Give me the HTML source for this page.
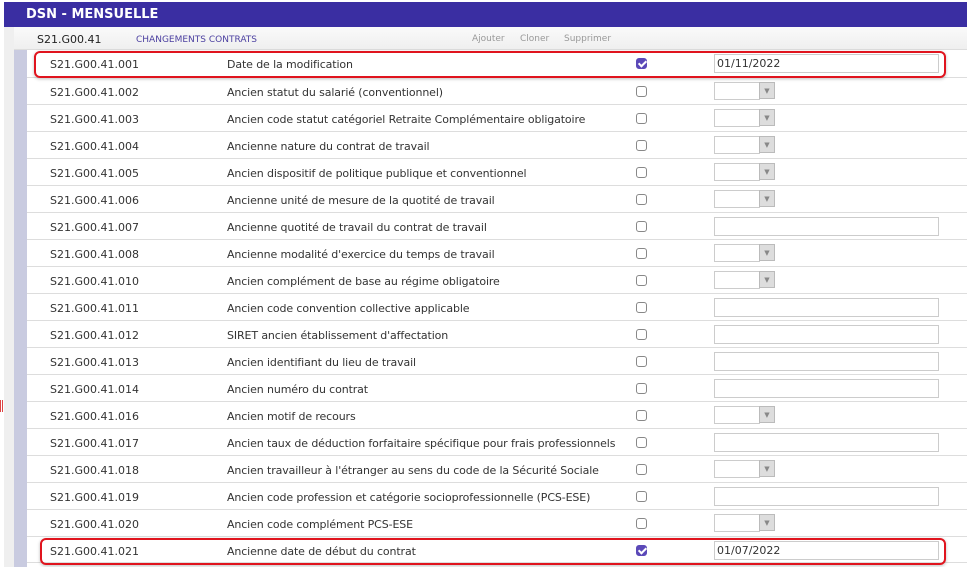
<!DOCTYPE html>
<html><head><meta charset="utf-8"><style>
*{margin:0;padding:0;box-sizing:border-box}
body{width:967px;height:567px;background:#fff;position:relative;overflow:hidden;font-family:"DejaVu Sans",Verdana,sans-serif;font-size:11px;color:#333}
.lg{position:absolute;left:0;top:0;width:4px;height:567px;background:#fff}
.left{position:absolute;left:4px;top:27px;width:10px;height:540px;background:#efefef}
.strip{position:absolute;left:14px;top:50px;width:13px;height:517px;background:#c9cbe0}
.hdr{position:absolute;left:4px;top:2px;width:963px;height:25px;background:#3a2ea2;color:#fff;font-weight:bold;font-size:13px;padding:5px 0 0 22px}
.sub{position:absolute;left:14px;top:27px;width:953px;height:23px;background:linear-gradient(#fafafa,#efefef);border-bottom:1px solid #ddd}
.sub .c{position:absolute;left:23px;top:6px;color:#222}
.sub .t{position:absolute;left:122px;top:8px;font-size:9px;color:#4b3fa0}
.sub .a{position:absolute;top:7px;font-size:9px;color:#999}
.row{position:absolute;left:27px;width:940px;height:27px;border-top:1px solid #ddd}
.row .c{position:absolute;left:23px;top:8px}
.row .l{position:absolute;left:200px;top:8px;letter-spacing:-0.12px}
.cb{position:absolute;left:609px;top:8px;width:11px;height:11px;border:1px solid #888;border-radius:3px;background:#fff}
.cb.on{background:#5b49b8;border-color:#5b49b8}
.cb.on:after{content:"";position:absolute;left:3px;top:0px;width:3px;height:6px;border:solid #fff;border-width:0 2px 2px 0;transform:rotate(45deg)}
.in{position:absolute;left:687px;top:4px;width:225px;height:19px;border:1px solid #ccc;background:#fff;padding:2px 2px;font-size:11px;color:#333}
.sel{position:absolute;left:687px;top:4px;width:46px;height:18px;border:1px solid #ccc;border-right:none;background:#fff}
.arr{position:absolute;left:732px;top:4px;width:16px;height:17px;border:1px solid #bbb;background:#ddd;font-size:7px;color:#888;text-align:center;line-height:16px}
.red{position:absolute;border:2px solid #e0141e;border-radius:6px;box-shadow:0 1px 3px rgba(0,0,0,.25)}
.rm{position:absolute;left:0;top:400px;width:1px;height:12px;background:#d44;box-shadow:2px 0 #d44}
</style></head><body>
<div class="lg"></div><div class="left"></div><div class="strip"></div>
<div class="hdr">DSN - MENSUELLE</div>
<div class="sub"><span class="c">S21.G00.41</span><span class="t">CHANGEMENTS CONTRATS</span><span class="a" style="left:458px">Ajouter</span><span class="a" style="left:506px">Cloner</span><span class="a" style="left:550px">Supprimer</span></div>
<div class="rm"></div>
<div class="row" style="top:50px;border-top:none"><span class="c">S21.G00.41.001</span><span class="l">Date de la modification</span><span class="cb on"></span><span class="in">01/11/2022</span></div>
<div class="row" style="top:77px"><span class="c">S21.G00.41.002</span><span class="l">Ancien statut du salarié (conventionnel)</span><span class="cb"></span><span class="sel"></span><span class="arr">▼</span></div>
<div class="row" style="top:104px"><span class="c">S21.G00.41.003</span><span class="l">Ancien code statut catégoriel Retraite Complémentaire obligatoire</span><span class="cb"></span><span class="sel"></span><span class="arr">▼</span></div>
<div class="row" style="top:131px"><span class="c">S21.G00.41.004</span><span class="l">Ancienne nature du contrat de travail</span><span class="cb"></span><span class="sel"></span><span class="arr">▼</span></div>
<div class="row" style="top:158px"><span class="c">S21.G00.41.005</span><span class="l">Ancien dispositif de politique publique et conventionnel</span><span class="cb"></span><span class="sel"></span><span class="arr">▼</span></div>
<div class="row" style="top:185px"><span class="c">S21.G00.41.006</span><span class="l">Ancienne unité de mesure de la quotité de travail</span><span class="cb"></span><span class="sel"></span><span class="arr">▼</span></div>
<div class="row" style="top:212px"><span class="c">S21.G00.41.007</span><span class="l">Ancienne quotité de travail du contrat de travail</span><span class="cb"></span><span class="in"></span></div>
<div class="row" style="top:239px"><span class="c">S21.G00.41.008</span><span class="l">Ancienne modalité d'exercice du temps de travail</span><span class="cb"></span><span class="sel"></span><span class="arr">▼</span></div>
<div class="row" style="top:266px"><span class="c">S21.G00.41.010</span><span class="l">Ancien complément de base au régime obligatoire</span><span class="cb"></span><span class="sel"></span><span class="arr">▼</span></div>
<div class="row" style="top:293px"><span class="c">S21.G00.41.011</span><span class="l">Ancien code convention collective applicable</span><span class="cb"></span><span class="in"></span></div>
<div class="row" style="top:320px"><span class="c">S21.G00.41.012</span><span class="l">SIRET ancien établissement d'affectation</span><span class="cb"></span><span class="in"></span></div>
<div class="row" style="top:347px"><span class="c">S21.G00.41.013</span><span class="l">Ancien identifiant du lieu de travail</span><span class="cb"></span><span class="in"></span></div>
<div class="row" style="top:374px"><span class="c">S21.G00.41.014</span><span class="l">Ancien numéro du contrat</span><span class="cb"></span><span class="in"></span></div>
<div class="row" style="top:401px"><span class="c">S21.G00.41.016</span><span class="l">Ancien motif de recours</span><span class="cb"></span><span class="sel"></span><span class="arr">▼</span></div>
<div class="row" style="top:428px"><span class="c">S21.G00.41.017</span><span class="l">Ancien taux de déduction forfaitaire spécifique pour frais professionnels</span><span class="cb"></span><span class="in"></span></div>
<div class="row" style="top:455px"><span class="c">S21.G00.41.018</span><span class="l">Ancien travailleur à l'étranger au sens du code de la Sécurité Sociale</span><span class="cb"></span><span class="sel"></span><span class="arr">▼</span></div>
<div class="row" style="top:482px"><span class="c">S21.G00.41.019</span><span class="l">Ancien code profession et catégorie socioprofessionnelle (PCS-ESE)</span><span class="cb"></span><span class="in"></span></div>
<div class="row" style="top:509px"><span class="c">S21.G00.41.020</span><span class="l">Ancien code complément PCS-ESE</span><span class="cb"></span><span class="sel"></span><span class="arr">▼</span></div>
<div class="row" style="top:536px;border-bottom:1px solid #ddd"><span class="c">S21.G00.41.021</span><span class="l">Ancienne date de début du contrat</span><span class="cb on"></span><span class="in">01/07/2022</span></div>
<div class="red" style="left:34px;top:51px;width:912px;height:27px"></div>
<div class="red" style="left:40px;top:538px;width:906px;height:27px"></div>
</body></html>
